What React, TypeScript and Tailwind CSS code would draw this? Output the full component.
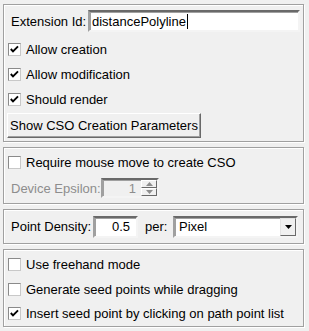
import type { ReactNode } from "react";

// Classic Windows-style panel: etched group boxes, sunken inputs, raised buttons.

function Group({ className, children }: { className: string; children: ReactNode }) {
  return (
    <div
      className={`border border-[#a0a0a0] shadow-[inset_1px_1px_0_#fff,1px_1px_0_#fff] ${className}`}
    >
      {children}
    </div>
  );
}

function Check({ checked, label }: { checked?: boolean; label: string }) {
  return (
    <div className="flex h-[25px] items-center pl-[4px]">
      <div className="flex h-[13px] w-[13px] items-center justify-center border border-[#8a8a8a] border-b-[#c8c8c8] border-r-[#c8c8c8] bg-white">
        {checked ? (
          <svg width="11" height="11" viewBox="0 0 11 11">
            <polyline points="1.8,5 4,7.4 9,2.3" fill="none" stroke="#000" strokeWidth="1.9" />
          </svg>
        ) : null}
      </div>
      <span className="ml-[5px]">{label}</span>
    </div>
  );
}

function Sunken({ className, children }: { className: string; children?: ReactNode }) {
  return (
    <div
      className={`border-2 border-t-[#696969] border-l-[#a0a0a0] border-r-[#f4f4f4] border-b-[#f4f4f4] shadow-[inset_1px_1px_0_#a0a0a0] ${className}`}
    >
      {children}
    </div>
  );
}

function Triangle({ up, color = "#000" }: { up?: boolean; color?: string }) {
  return (
    <svg width="7" height="4" viewBox="0 0 7 4">
      <polygon points={up ? "0,4 7,4 3.5,0" : "0,0 7,0 3.5,4"} fill={color} />
    </svg>
  );
}

export default function App() {
  return (
    <div
      className="h-[331px] w-[309px] bg-[#f0f0f0] pl-[3px] pr-[5px] pt-[4px] text-[13px] leading-none text-black"
      style={{ fontFamily: '"Liberation Sans", Arial, sans-serif' }}
    >
      <div className="flex flex-col gap-[5px]">
        <Group className="flex h-[138px] flex-col pt-[5px]">
          <div className="flex h-[22px] items-center pl-[7px]">
            <span className="w-[77px]">Extension Id:</span>
            <Sunken className="flex h-[22px] w-[212px] items-center bg-white pl-[2px]">
              <span>distancePolyline</span>
              <span className="ml-px h-[15px] w-px bg-black" />
            </Sunken>
          </div>
          <div className="mt-[5px]">
            <Check checked label="Allow creation" />
            <Check checked label="Allow modification" />
            <Check checked label="Should render" />
          </div>
          <div className="mt-px pl-[3px]">
            <button className="h-[25px] w-[194px] border border-t-white border-l-white border-r-[#696969] border-b-[#696969] bg-[#f0f0f0] shadow-[inset_-1px_-1px_0_#a0a0a0] text-[13px]">
              Show CSO Creation Parameters
            </button>
          </div>
        </Group>

        <Group className="flex h-[57px] flex-col pt-[2px]">
          <Check label="Require mouse move to create CSO" />
          <div className="mt-[3px] flex items-center pl-[7px]">
            <span className="w-[90px] text-[#8d8d8d]">Device Epsilon:</span>
            <Sunken className="flex h-[20px] w-[58px] items-center bg-[#f0f0f0]">
              <span className="flex-1 pr-[5px] text-right text-[#8d8d8d]">1</span>
              <div className="flex h-full w-[16px] flex-col">
                <div className="flex flex-1 items-center justify-center border border-t-white border-l-white border-r-[#696969] border-b-[#696969] bg-[#f0f0f0]">
                  <Triangle up color="#8d8d8d" />
                </div>
                <div className="flex flex-1 items-center justify-center border border-t-white border-l-white border-r-[#696969] border-b-[#696969] bg-[#f0f0f0]">
                  <Triangle color="#8d8d8d" />
                </div>
              </div>
            </Sunken>
          </div>
        </Group>

        <Group className="flex h-[35px] items-center pl-[7px]">
          <span className="w-[82px]">Point Density:</span>
          <Sunken className="flex h-[22px] w-[45px] items-center justify-end bg-white pr-[6px]">
            <span>0.5</span>
          </Sunken>
          <span className="ml-[7px] w-[28px]">per:</span>
          <Sunken className="flex h-[22px] w-[125px] items-center bg-white pl-[3px]">
            <span className="flex-1 border border-dotted border-transparent">Pixel</span>
            <div className="flex h-full w-[16px] items-center justify-center border border-t-[#e3e3e3] border-l-[#e3e3e3] border-r-[#696969] border-b-[#696969] bg-[#f0f0f0]">
              <Triangle />
            </div>
          </Sunken>
        </Group>

        <Group className="flex h-[78px] flex-col pt-[2px]">
          <Check label="Use freehand mode" />
          <Check label="Generate seed points while dragging" />
          <Check checked label="Insert seed point by clicking on path point list" />
        </Group>
      </div>
    </div>
  );
}
